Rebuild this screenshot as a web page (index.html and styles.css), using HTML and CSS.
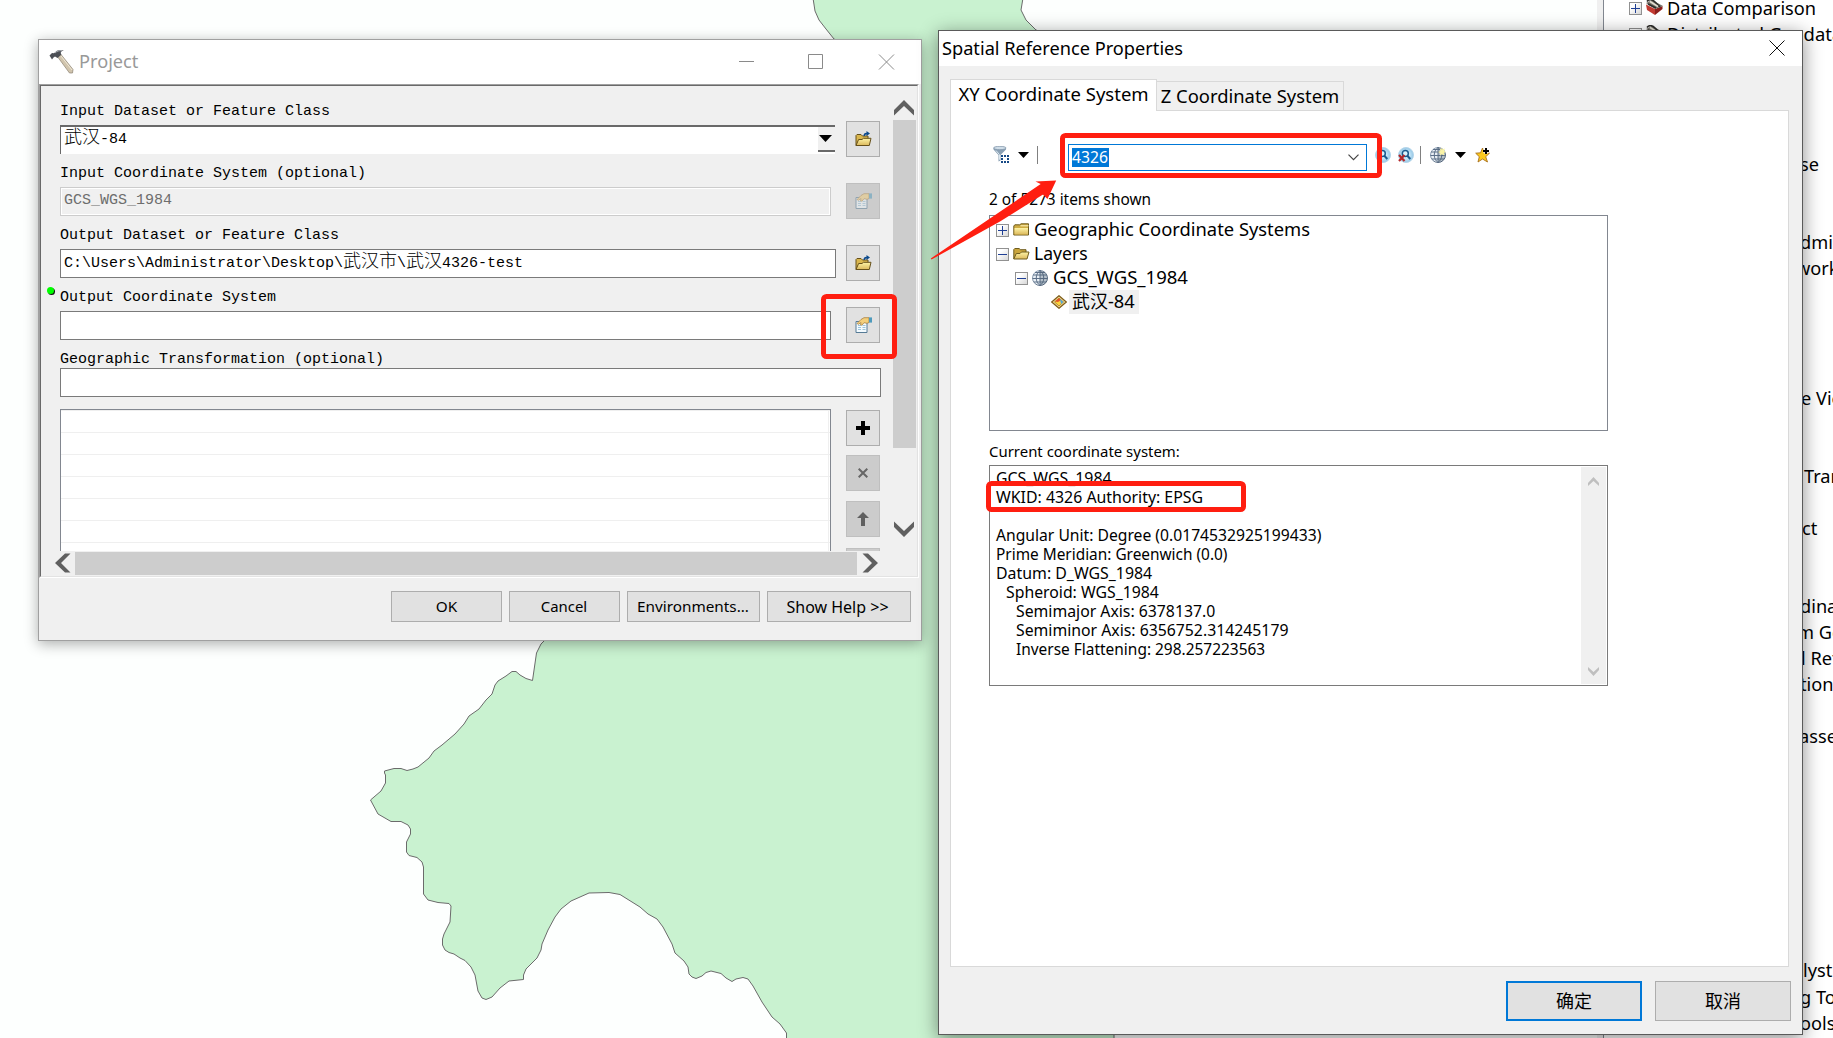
FILE: index.html
```html
<!DOCTYPE html>
<html lang="en">
<head>
<meta charset="utf-8">
<title>Project</title>
<link rel="stylesheet" href="styles.css">
</head>
<body>
<svg width="0" height="0" class="defs">
  <defs>
    <linearGradient id="gold" x1="0" y1="0" x2="0" y2="1"><stop offset="0" stop-color="#fdf3a6"/><stop offset="1" stop-color="#dcb95c"/></linearGradient>
    <linearGradient id="steel" x1="0" y1="0" x2="1" y2="1"><stop offset="0" stop-color="#9fb0c4"/><stop offset="1" stop-color="#46586e"/></linearGradient>
    <linearGradient id="toggleFill" x1="0" y1="0" x2="1" y2="1"><stop offset="0.3" stop-color="#fff"/><stop offset="1" stop-color="#d5d5d5"/></linearGradient>
    <radialGradient id="lens"><stop offset="0.3" stop-color="#d9f2fd"/><stop offset="1" stop-color="#93c6e6"/></radialGradient>
    <symbol id="browse" viewBox="0 0 17 16">
      <path d="M1 14.500V4.500l1-1h4l1.500 1.500H13v3" fill="#d9b64e" stroke="#66501a"/>
      <path d="M1 14.500l2.600-6H7l1.400-1.200H16l-1.700 7.200z" fill="url(#gold)" stroke="#66501a"/>
      <path d="M8.500 5c0-2.300 1-3.200 3-3.200V0L15 2.500 11.500 5V3.500c-1 0-1.500.5-1.500 1.500z" fill="#0c4a8c"/>
    </symbol>
    <symbol id="props" viewBox="0 0 17 16">
      <path d="M1 4.500h11v11H1z" fill="#f3fafe" stroke="#567b96"/>
      <path d="M3 8.500h3M7.500 8.500h3M3 10.500h3M7.500 10.500h3M3 12.500h3M7.500 12.500h3" stroke="#9cc4da"/>
      <path d="M2 6.500 6 2.500 9 .700h5v4.800l-2 .8-3-.6-2 2.500-1.500-.4.500-2.300-2.500 1.800z" fill="#f3cf7c" stroke="#a9803f" stroke-width=".8"/>
      <path d="M14 .4h3v5.200h-3z" fill="#4e9abc"/>
    </symbol>
    <symbol id="plus" viewBox="0 0 13 13"><rect class="toggle-box" x=".5" y=".5" width="12" height="12"/><path d="M2 6.500h9M6.500 2v9" stroke="#1f3f95"/></symbol>
    <symbol id="minus" viewBox="0 0 13 13"><rect class="toggle-box" x=".5" y=".5" width="12" height="12"/><path d="M2 6.500h9" stroke="#1f3f95"/></symbol>
    <symbol id="globe" viewBox="0 0 16 16">
      <circle cx="8" cy="8" r="7.500" fill="#e9eff5" stroke="url(#steel)"/>
      <path d="M1 5h14M.5 8.500h15M2 12h12M3 2.500h10M8 0v16M8 .5C3 4 3 12 8 15.500M8 .5c5 3.500 5 11.500 0 15" fill="none" stroke="#5d7088" stroke-width="1"/>
      <path d="M8 .5a7.500 7.500 0 0 1 0 15" fill="#46586e" opacity=".3"/>
    </symbol>
    <symbol id="find" viewBox="0 0 16 16">
      <circle cx="8" cy="8" r="7.500" fill="url(#lens)" stroke="#b5d6ea"/>
      <circle cx="7.300" cy="6.500" r="3" fill="#d9f2fd" stroke="#1c5a8c" stroke-width="1.500"/>
      <path d="M9.300 8.800l3 3.200" stroke="#1c5a8c" stroke-width="2"/>
    </symbol>
    <symbol id="toolbox" viewBox="0 0 17 16">
      <path d="M0 5.500 9 10v6L1 11z" fill="#c23a31"/><path d="M9 10l7.500-3v3L9 16z" fill="#8c1f1c"/>
      <path d="M0 4 6 1l11 6-8 3z" fill="#77746c"/><path d="M1 2.500C3 0 6 0 9 3l5 5M2 5l8 4" fill="none" stroke="#2e2d2a" stroke-width="1.700"/>
      <path d="M4 2.500l8 5" stroke="#e3ded1" stroke-width="1.500"/>
    </symbol>
  </defs>
</svg>

<main class="desktop">
  <svg class="map" width="1597" height="1038" viewBox="0 0 1597 1038">
    <path class="region" d="M813 -2 815 11 819 20 826 29 834 39 900 80 900 600 545 640 541 644 536.500 653 532.500 680.500 526 678.500 520 675 516 671.500H512L506 676 498 681 495 685 492 694 486 700 479 709 469 716 464 724 455 734 442 745 434 751 429 758 418 767 413 769 407 770.500 401 768.500H394L384.500 771V773L385.500 775V783L381 791 370.500 800 378 814 391 821.500H401L408 825 410.500 829V834L406.500 842V852L409 855.500 417 857.500 422 862 423.500 867V894L428 900 438 902.500 449 903.500 451 906 450 922 444 934 442.500 939V945L445 950 449 952.500 454 954 460 958 465 960.500 471 967 475 975 478 991 482 998 486 999.500 492 997 500 988 509 981 523.500 979.500V975L526 969 530 965 537 958 541 950 542 944 548 930 555 917 561 909 571 901 580 897 589 893 609 892.500 620 894.500 632 902 640 907 648 914 657 919 663 927 672 944 675 953 684 961 688 967 689 974 692 977 696 978.500 702 976 706 972.500 711 971 721 973.500 726 978 732 981.500 736 979 743 977.500 748 979 753 986 762 1002 772 1017 780 1024 786.500 1033V1040H1114V60L1036 30 1026 20 1021 10 1023 -2z"/>
  </svg>

  <aside class="catalog">
    <ul class="tools">
      <li class="tool"><svg width="13" height="13"><use href="#plus"/></svg><svg width="17" height="16"><use href="#toolbox"/></svg><span>Data Comparison</span></li>
      <li class="tool geodata"><svg width="13" height="13"><use href="#plus"/></svg><svg width="17" height="16"><use href="#toolbox"/></svg><span>Distributed Geodatabase</span></li>
    </ul>
    <ul class="tails">
      <li>se</li><li></li><li></li><li>dmi</li><li class="in-v">work</li><li></li><li></li><li></li><li></li><li class="in-e">e Views</li>
      <li></li><li></li><li class="in-t">Transformations</li><li></li><li class="in-c">ct</li><li></li><li></li><li>dinate</li><li class="in-m">m Geographic</li><li class="in-l">l Reference</li>
      <li>tion</li><li></li><li class="in-a">asses</li><li></li><li></li><li></li><li></li><li></li><li></li><li></li><li></li><li class="in-y">lyst</li><li>g Tools</li><li>ools</li>
    </ul>
  </aside>

  <section class="window project">
    <header class="project-title">
      <svg width="25" height="25" viewBox="0 0 25 25">
        <path d="M8 7 12 5.500 24 20.500 23.500 24 20.500 24z" fill="#d0c4ad" stroke="#8d8372" stroke-width=".7"/>
        <path d="M12 7l11 14" stroke="#f0e8d6"/>
        <path d="M.5 6.500 3 4l2 .3C7.500 1 11 .2 15 1.500 12 2 11 3.500 12.500 5.500L8.500 9 6 7.500l-1.500 1L3 10.500z" fill="#4c4f55"/>
        <path d="M6 4C8 2 10 1.500 13 1.700" fill="none" stroke="#aeb2b8"/>
      </svg>
      <h1>Project</h1>
      <svg class="controls" width="156" height="16" viewBox="0 0 156 16">
        <path d="M0 7.500h15M69.500.5h14v14h-14zM140 .5l15 15M155 .5l-15 15" fill="none" stroke="#8a8a8a"/>
      </svg>
    </header>

    <div class="frame">
      <div class="frame-inner">
        <div class="form">
          <div class="group"><label>Input Dataset or Feature Class</label>
            <div class="row"><div class="combo"><span><b>武汉</b>-84</span><i class="drop"><svg width="13" height="7" viewBox="0 0 13 7"><path d="M0 0h13L6.500 7z"/></svg></i></div>
              <button class="tool-btn"><svg width="17" height="16"><use href="#browse"/></svg></button></div></div>
          <div class="group"><label>Input Coordinate System (optional)</label>
            <div class="row"><div class="field disabled short">GCS_WGS_1984</div>
              <button class="tool-btn off"><svg width="17" height="16" class="faded"><use href="#props"/></svg></button></div></div>
          <div class="group"><label>Output Dataset or Feature Class</label>
            <div class="row"><div class="field mid">C:\Users\Administrator\Desktop\<b>武汉市</b>\<b>武汉</b>4326-test</div>
              <button class="tool-btn"><svg width="17" height="16"><use href="#browse"/></svg></button></div></div>
          <div class="group"><label class="required">Output Coordinate System</label>
            <div class="row"><div class="field short"></div>
              <button class="tool-btn"><svg width="17" height="16"><use href="#props"/></svg></button></div></div>
          <div class="transform"><label>Geographic Transformation (optional)</label><div class="field wide"></div></div>
          <div class="row list-row">
            <div class="list"></div>
            <div class="list-actions">
              <button class="tool-btn"><svg width="14" height="14" viewBox="0 0 14 14"><path d="M5 0h4v5h5v4H9v5H5V9H0V5h5z"/></svg></button>
              <button class="tool-btn off"><svg width="10" height="10" viewBox="0 0 10 10"><path d="M.7.7l8.600 8.600M9.300.7L.7 9.300" stroke="#666" stroke-width="2"/></svg></button>
              <button class="tool-btn off"><svg width="12" height="14" viewBox="0 0 12 14"><path d="M6 0l6 6H8v8H4V6H0z" fill="#606060"/></svg></button>
              <button class="tool-btn off"></button>
            </div>
          </div>
        </div>
        <div class="vscroll">
          <svg width="20" height="16" viewBox="0 0 20 16"><path d="M0 10 10 0l10 10v5.500L10 6 0 15.500z"/></svg>
          <div class="thumb"></div>
          <svg width="20" height="16" viewBox="0 0 20 16"><path d="M0 6l10 10L20 6V.5L10 10 0 .5z"/></svg>
        </div>
        <div class="hscroll">
          <svg width="16" height="20" viewBox="0 0 16 20"><path d="M10 .5h5.500L6 10l9.500 9.500H10L0 10z"/></svg>
          <div class="thumb"></div>
          <svg width="16" height="20" viewBox="0 0 16 20"><path d="M6 .5H.5L10 10 .5 19.500H6L16 10z"/></svg>
        </div>
      </div>
    </div>

    <footer class="project-actions">
      <button class="ok">OK</button><button class="cancel">Cancel</button><button class="env">Environments...</button><button class="help">Show Help &gt;&gt;</button>
    </footer>
  </section>

  <section class="window spatial">
    <header class="spatial-title"><h1>Spatial Reference Properties</h1>
      <svg width="16" height="16" viewBox="0 0 16 16"><path d="M.5.5l15 15M15.500.5l-15 15" stroke="#111"/></svg></header>
    <div class="spatial-body">
      <nav class="tabs"><a class="tab active">XY Coordinate System</a><a class="tab">Z Coordinate System</a></nav>
      <div class="panel">
        <div class="toolbar">
          <svg width="17" height="17" viewBox="0 0 17 17">
            <path d="M.5 2v1.500l5 5.500v6.500l2-1V9l5.500-5.500V2z" fill="#8aa0b4"/><path d="M3 4.500l3.500 4.200v5" fill="none" stroke="#dce8f0"/>
            <ellipse cx="6.800" cy="2" rx="6.300" ry="1.700" fill="#cfdde8" stroke="#758ba0" stroke-width=".7"/>
            <path d="M8 9h2v2H8zM11 9h2v2h-2zM14 9h2v2h-2zM8 12h2v2H8zM14 12h2v2h-2zM8 15h2v2H8zM11 15h2v2h-2zM14 15h2v2h-2z" fill="#174a86"/>
          </svg>
          <svg class="caret" width="11" height="6" viewBox="0 0 11 6"><path d="M0 0h11L5.500 6z"/></svg>
          <i class="sep"></i>
          <div class="search"><span>4326</span><svg width="11" height="7" viewBox="0 0 11 7"><path d="M.5.700l5 5 5-5" fill="none" stroke="#444" stroke-width="1.200"/></svg></div>
          <svg class="find" width="16" height="16"><use href="#find"/></svg>
          <svg class="clear" width="16" height="16" viewBox="0 0 16 16"><use href="#find"/><path d="M1 8l5.500 6M6.500 8L1 14" stroke="#b5282a" stroke-width="2.200"/></svg>
          <i class="sep"></i>
          <svg class="new-globe" width="16" height="16" viewBox="0 0 16 16"><use href="#globe"/><path d="M11.500 0l1 2.200L15 1.500l-1 2.300 2 1.200-2.200 1 .6 2.500-2.400-1.200-2 1.500.3-2.600L8 5l2.200-1-.4-2.500 1.500 1z" fill="#f9f3a6"/></svg>
          <svg class="caret" width="11" height="6" viewBox="0 0 11 6"><path d="M0 0h11L5.500 6z"/></svg>
          <svg class="star" width="16" height="16" viewBox="0 0 16 16"><path d="M7.500 1l2 4.800 5 .4-3.800 3.500L12.500 15l-5-3-4.500 3 1.300-5.300L.7 6.200l4.900-.4z" fill="#fbc91d" stroke="#a9701c" stroke-width=".9"/><path d="M11 1v6M8 4h6" stroke="#fff" stroke-width="3"/><path d="M11 1v6M8 4h6" stroke="#000" stroke-width="2"/></svg>
        </div>
        <p class="count">2 of 5273 items shown</p>
        <ul class="tree">
          <li><svg width="13" height="13"><use href="#plus"/></svg>
            <svg class="folder" width="17" height="16" viewBox="0 0 17 16"><path d="M.8 13V4l1-1.200h5L8 1.800h7.500V13z" fill="#cfac42" stroke="#6e5c1f"/><path d="M1.500 6h13.500v6.500H1.500z" fill="url(#gold)"/><path d="M7.500 3.800h8" stroke="#fff6c0"/></svg><span class="geo">Geographic Coordinate Systems</span></li>
          <li class="layers"><svg width="13" height="13"><use href="#minus"/></svg>
            <svg class="folder" width="17" height="16" viewBox="0 0 17 16"><path d="M.8 13V3.500l1-1h4.500l1 1.200H13v3" fill="#c9a43c" stroke="#6e5c1f"/><path d="M.8 13l2.500-5.500H7L8.500 6H16l-2 7z" fill="url(#gold)" stroke="#6e5c1f"/></svg><span>Layers</span></li>
          <li class="gcs"><svg width="13" height="13"><use href="#minus"/></svg><svg width="16" height="16"><use href="#globe"/></svg><span>GCS_WGS_1984</span></li>
          <li class="leaf"><svg width="16" height="14" viewBox="0 0 16 14"><path d="M8 .7 15.300 7 8 13.300.7 7z" fill="#f5e29a" stroke="#7e5c1a" stroke-width="1.200"/><path d="M8 3l4.500 4L8 11 3.500 7z" fill="#fbd33b" stroke="#8a5a1a" stroke-width=".6"/><path d="M8 3l2 2-3 2-3-.5z" fill="#e2552d"/><path d="M9 4l3.500 3L10 9z" fill="#54a6dc"/></svg><span class="selected"><b>武汉</b>-84</span></li>
        </ul>
        <p class="current">Current coordinate system:</p>
        <div class="details">
          <div class="details-text">
            <p class="name">GCS_WGS_1984</p><p class="name">WKID: 4326 Authority: EPSG</p><p></p>
            <p class="angular">Angular Unit: Degree (0.0174532925199433)</p><p>Prime Meridian: Greenwich (0.0)</p><p class="name">Datum: D_WGS_1984</p>
            <p class="in1">Spheroid: WGS_1984</p><p class="in2">Semimajor Axis: 6378137.0</p><p class="in2 minor">Semiminor Axis: 6356752.314245179</p><p class="in2">Inverse Flattening: 298.257223563</p>
          </div>
          <div class="details-scroll">
            <svg width="11" height="9" viewBox="0 0 11 9"><path d="M0 6 5.500 0 11 6v3L5.500 4 0 9z"/></svg>
            <svg width="11" height="9" viewBox="0 0 11 9"><path d="M0 3l5.500 6L11 3V0L5.500 5 0 0z"/></svg>
          </div>
        </div>
      </div>
      <footer class="spatial-actions"><button class="confirm">确定</button><button>取消</button></footer>
    </div>
  </section>

  <svg class="marks" width="1833" height="1038" viewBox="0 0 1833 1038">
    <path class="arrow" d="M930.800 258.500 1040.700 184 1035.500 181.500 1056.200 180.500 1047.500 199 1043 194.500 1000 221.500 931.500 259.500z"/>
    <rect class="mark" x="823.500" y="296.500" width="71" height="60" rx="3"/>
    <rect class="mark" x="1062.500" y="135.500" width="317" height="40" rx="3"/>
    <rect class="mark" x="988.500" y="483.500" width="255" height="26" rx="3"/>
  </svg>
</main>
</body>
</html>
```
FILE: styles.css
```css
* { box-sizing: border-box; margin: 0; padding: 0; }
body { width: 1833px; height: 1038px; overflow: hidden; background: #fff; color: #000; font-family: "Noto Sans", "Noto Sans CJK SC", sans-serif; font-size: 18.2px; }
ul { list-style: none; }
svg { display: block; flex: none; }
b { font-weight: 300; font-family: "Noto Sans CJK SC", sans-serif; font-size: 18px; line-height: 1; }
h1 { font-size: 18.2px; font-weight: 400; }
label { display: block; }
button { font-family: inherit; color: #000; background: #e1e1e1; border: 1px solid #adadad; display: flex; align-items: center; justify-content: center; }
.defs { position: absolute; }
.desktop { position: relative; width: 1833px; height: 1038px; overflow: hidden; display: flex; background: #fdfffe; }
.region { fill: #c9f2d0; stroke: #6b6b6b; stroke-width: 1; }
.toggle-box { fill: url(#toggleFill); stroke: #919191; }

/* Tool catalogue docked at the right edge */
.catalog { flex: 1; min-width: 0; background: #fff; border-left: 6px solid #f0f0f0; overflow: hidden; white-space: nowrap; box-shadow: inset 1px 0 #828790; line-height: 26px; }
.tools { margin-top: -5px; padding-left: 26px; }
.tool { height: 26px; display: flex; align-items: center; }
.tool svg + svg { margin: -2px 4px 0 4px; }
.geodata { font-size: 18.4px; }
.tails { padding: 104px 0 0 197px; }
.tails li { height: 26.030px; }
.in-v { text-indent: -4px; }
.in-e, .in-l { text-indent: 1px; }
.in-c { text-indent: 2px; }
.in-t { text-indent: 4px; }
.in-m { text-indent: -3px; }
.in-a { text-indent: -1px; }
.in-y { text-indent: 3px; }

.window { position: absolute; display: flex; flex-direction: column; background: #f0f0f0; }

/* Geoprocessing dialog */
.project { left: 38px; top: 39px; width: 884px; height: 602px; border: 1px solid #a0a0a0; box-shadow: 0 3px 13px rgba(0, 0, 0, .32); }
.project-title { height: 44px; background: #fff; display: flex; align-items: center; padding: 0 26px 0 10px; color: #999; }
.project-title h1 { margin: -2px 0 0 5px; line-height: 26px; }
.project-title svg:first-child { margin-top: -2px; }
.controls { margin-left: auto; margin-top: -1px; }
.frame { width: 880px; height: 494px; border: 1px solid; border-color: #a0a0a0 #fff #fff #a0a0a0; }
.frame-inner { height: 492px; border: 1px solid; border-color: #696969 #e3e3e3 #e3e3e3 #696969; display: grid; grid-template-columns: 1fr 27px; grid-template-rows: 465px 25px; font-family: "Liberation Mono", "Noto Sans CJK SC", monospace; font-size: 15px; }
.form { padding: 11px 0 0 19px; overflow: hidden; white-space: nowrap; }
.group { height: 62px; }
.group label { height: 24px; line-height: 30px; }
.required { position: relative; }
.required::before { content: ""; position: absolute; left: -13px; top: 4px; width: 7px; height: 7px; border-radius: 4px; background: #0f0; box-shadow: 1px 1px #111; }
.row { display: flex; justify-content: space-between; align-items: flex-start; width: 820px; }
.field { height: 29px; background: #fff; border: 1px solid #7a7a7a; line-height: 25px; padding-left: 3px; }
.row .field, .combo { margin-top: 4px; }
.short { width: 771px; }
.mid { width: 776px; line-height: 24px; }
.wide { width: 821px; }
.disabled { background: #f0f0f0; border-color: #ccc; box-shadow: inset 0 0 0 1px #fff; color: #6d6d6d; }
.combo { width: 775px; height: 29px; background: #fff; border: solid; border-width: 2px 0 0 1px; border-color: #696969; display: flex; justify-content: space-between; padding-left: 3px; line-height: 18px; }
.combo span { margin-top: -1px; }
.drop { width: 17px; height: 25px; background: #f0f0f0; border-bottom: 2px solid #696969; display: flex; align-items: center; justify-content: center; }
.drop svg { margin-right: 2px; }
.tool-btn { width: 34px; height: 36px; flex: none; }
.off { background: #ccc; border-color: #bfbfbf; }
.faded { opacity: .5; }
.transform { height: 52px; }
.transform label { height: 23px; line-height: 30px; }
.list-row { margin-top: 12px; height: 142px; }
.list { width: 771px; height: 160px; border: 1px solid #828790; background: linear-gradient(#efefef, #efefef) 767px 0 / 1px 100% no-repeat, linear-gradient(#efefef 1px, #fff 1px) 0 0 / 100% 22px; }
.list-actions { display: grid; grid-template-rows: 45px 46px 47px 36px; padding-top: 1px; }
.vscroll { grid-row: 1; grid-column: 2; display: flex; flex-direction: column; align-items: center; padding: 14px 0 14px 1px; fill: #606060; }
.vscroll .thumb { width: 23px; height: 328px; margin: 4px 0 auto; background: #cdcdcd; }
.hscroll { grid-column: 1 / 3; display: flex; align-items: center; padding: 0 0 1px 14px; fill: #606060; }
.hscroll .thumb { width: 782px; height: 23px; margin: 1px 5px 0 4px; background: #cdcdcd; }
.project-actions { flex: 1; display: flex; justify-content: flex-end; gap: 7px; padding: 13px 10px 0 0; }
.project-actions button { height: 31px; font-size: 15.3px; padding: 0 1px 1px 0; }
.ok, .cancel { width: 111px; }
.project-actions .ok { padding-right: 0; }
.project-actions .cancel { font-size: 14.900px; }
.env { width: 133px; }
.help { width: 144px; }
.project-actions .help { font-size: 16px; padding: 0 3px 0 0; }

/* Spatial reference dialog */
.spatial { left: 938px; top: 30px; width: 865px; height: 1005px; border: 1px solid #5a5a5a; box-shadow: 0 4px 18px rgba(0, 0, 0, .45); }
.spatial-title { height: 35px; background: #fff; display: flex; align-items: center; justify-content: space-between; padding: 0 17px 0 3px; }
.spatial-title h1 { margin-top: -2px; }
.spatial-title svg { margin-top: -1px; }
.spatial-body { padding: 13px 0 0 11px; }
.tabs { height: 31px; display: flex; align-items: flex-end; }
.tab { height: 29px; width: 187px; border: 1px solid #d9d9d9; border-left: 0; border-bottom: 0; line-height: 28px; text-align: center; white-space: nowrap; font-size: 18.400px; }
.tab.active { position: relative; width: 207px; height: 32px; margin-bottom: -1px; background: #fff; border-left: 1px solid #d9d9d9; font-size: 18.500px; line-height: 28px; }
.panel { width: 839px; height: 857px; background: #fff; border: 1px solid #d9d9d9; padding: 22px 0 0 38px; }
.toolbar { height: 45px; display: flex; align-items: center; padding-left: 4px; }
.toolbar > svg, .sep { position: relative; top: -1px; }
.toolbar .caret { margin: 0 8px; }
.sep { width: 1px; height: 18px; background: #808080; }
.search { width: 299px; height: 27px; margin: 4px 8px 0 30px; border: 1px solid #0078d7; display: flex; align-items: center; justify-content: space-between; padding: 0 7px 0 3px; }
.search span { background: #0078d7; color: #fff; font-size: 15.700px; line-height: 19px; width: 37px; }
.clear { margin: 0 6px 0 7px; }
.new-globe { margin-left: 9px; }
.toolbar .new-globe + .caret { margin: 0 9px; }
.count { font-size: 15.4px; line-height: 20px; margin-top: 12px; }
.tree { width: 619px; height: 216px; margin-top: 5px; border: 1px solid #828790; padding: 2px 0 0 6px; }
.tree li { height: 24px; display: flex; align-items: center; line-height: 24px; white-space: nowrap; }
.folder { margin: 0 3px 0 4px; }
.tree li span { margin: -2px 0 0 1px; }
.geo { font-size: 18.350px; }
.tree .layers { font-size: 17.6px; }
.tree .gcs { padding-left: 19px; font-size: 18.550px; }
.gcs svg + svg { margin: 0 4px 0 4px; }
.leaf { padding-left: 55px; }
.leaf b { font-weight: 400; }
.tree .leaf .selected { background: #f0f0f0; padding: 0 4px 0 3px; margin: 0 0 0 2px; line-height: 22px; height: 24px; }
.current { font-size: 14.950px; line-height: 22px; margin-top: 9px; }
.details { width: 619px; height: 221px; margin-top: 3px; border: 1px solid #7a7a7a; display: flex; justify-content: space-between; padding: 1px 1px 1px 6px; font-size: 15.4px; }
.details-text { padding-top: 2px; white-space: nowrap; }
.details-text p { height: 19px; line-height: 19px; }
.name { font-size: 15.880px; }
.angular { font-size: 15.680px; }
.in1 { padding-left: 10px; font-size: 15.8px; }
.in2 { padding-left: 20px; font-size: 15.45px; }
.in2:nth-child(8) { font-size: 15.8px; }
.minor { font-size: 15.8px; }
.details-scroll { width: 25px; background: #f0f0f0; fill: #bfbfbf; display: flex; flex-direction: column; justify-content: space-between; align-items: center; padding: 10px 0 8px; }
.spatial-actions { display: flex; justify-content: flex-end; gap: 13px; padding: 14px 11px 0 0; }
.spatial-actions button { width: 136px; height: 40px; font-family: "Noto Sans CJK SC", sans-serif; font-size: 18px; font-weight: 400; padding-bottom: 2px; }
.spatial-actions .confirm { border: 2px solid #0078d7; }

.marks { position: absolute; left: 0; top: 0; }
.mark { fill: none; stroke: #ff1e10; stroke-width: 5; }
.arrow { fill: #ff1e10; }
```
